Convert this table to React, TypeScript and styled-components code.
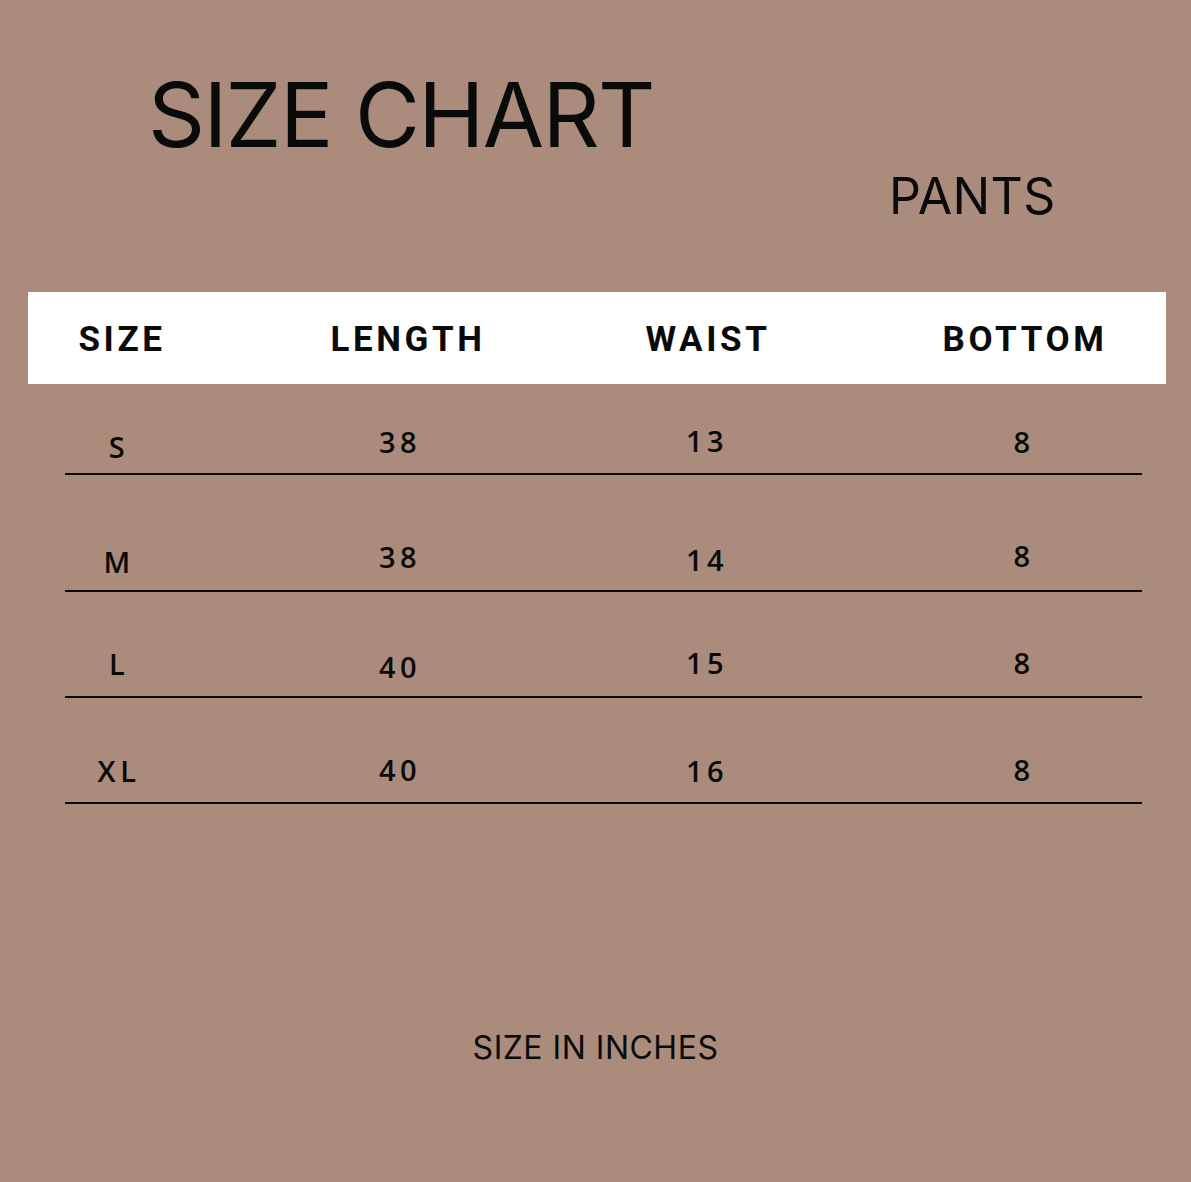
import React from "react";
import styled, { createGlobalStyle } from "styled-components";

const Global = createGlobalStyle`
  html, body { margin: 0; padding: 0; overflow: hidden; background: #ab8c7c; }
  * { box-sizing: border-box; }
`;

const Page = styled.main`
  width: 1191px;
  height: 1182px;
  background: #ab8c7c;
  color: #0a0a0a;
  display: flex;
  flex-direction: column;
  padding-top: 70px;
`;

const Title = styled.h1`
  margin: 0 0 0 148px;
  font-family: Inter, "Liberation Sans", sans-serif;
  font-weight: 400;
  font-size: 89px;
  line-height: 1;
  letter-spacing: -1.7px;
`;

const Subtitle = styled.h2`
  margin: 12px 0 0 889px;
  font-family: Inter, "Liberation Sans", sans-serif;
  font-weight: 400;
  font-size: 50px;
  line-height: 1;
  letter-spacing: 0.4px;
`;

/* Columns end on the centre line of each column of text; cells are
   zero-width anchors at those lines so the text centres on them. */
const HeaderBand = styled.div`
  margin: 71px 0 0 28px;
  width: 1138px;
  height: 92px;
  padding-top: 3px;
  background: #ffffff;
  display: grid;
  grid-template-columns: 94px 286px 300px 317px 1fr;
  align-items: center;
`;

const HeaderCell = styled.div`
  justify-self: end;
  width: 0;
  display: flex;
  justify-content: center;
  white-space: nowrap;
  font-family: Roboto, "Open Sans", sans-serif;
  font-weight: 700;
  font-size: 35px;
  line-height: 1;
  letter-spacing: 3.6px;
`;

const Table = styled.div`
  margin-left: 65px;
  width: 1077px;
  display: flex;
  flex-direction: column;
`;

const Row = styled.div<{ $h: number }>`
  height: ${(p) => p.$h}px;
  border-bottom: 2px solid #0a0a0a;
  display: grid;
  grid-template-columns: 54px 281px 307px 317px 1fr;
  align-items: end;
`;

const Cell = styled.div<{ $lift: number }>`
  justify-self: end;
  width: 0;
  display: flex;
  justify-content: center;
  white-space: nowrap;
  font-family: "Open Sans", "Liberation Sans", sans-serif;
  font-weight: 600;
  font-size: 29px;
  line-height: 1;
  letter-spacing: 4.5px;
  margin-bottom: ${(p) => p.$lift - 3}px;
`;

const Footer = styled.p`
  margin: 228px 0 0;
  text-align: center;
  font-family: Inter, "Liberation Sans", sans-serif;
  font-weight: 400;
  font-size: 32px;
  line-height: 1;
  letter-spacing: 0.5px;
`;

const headers = ["SIZE", "LENGTH", "WAIST", "BOTTOM"];

const rows: { h: number; cells: [string, number][] }[] = [
  { h: 91, cells: [["S", 15], ["38", 20], ["13", 21], ["8", 20]] },
  { h: 117, cells: [["M", 17], ["38", 22], ["14", 19], ["8", 23]] },
  { h: 106, cells: [["L", 21], ["40", 18], ["15", 22], ["8", 22]] },
  { h: 106, cells: [["XL", 20], ["40", 21], ["16", 20], ["8", 21]] },
];

export default function App() {
  return (
    <>
      <Global />
      <Page>
        <Title>SIZE CHART</Title>
        <Subtitle>PANTS</Subtitle>
        <HeaderBand>
          {headers.map((h) => (
            <HeaderCell key={h}>{h}</HeaderCell>
          ))}
        </HeaderBand>
        <Table>
          {rows.map((r, i) => (
            <Row key={i} $h={r.h}>
              {r.cells.map(([v, lift], j) => (
                <Cell key={j} $lift={lift}>
                  {v}
                </Cell>
              ))}
            </Row>
          ))}
        </Table>
        <Footer>SIZE IN INCHES</Footer>
      </Page>
    </>
  );
}
